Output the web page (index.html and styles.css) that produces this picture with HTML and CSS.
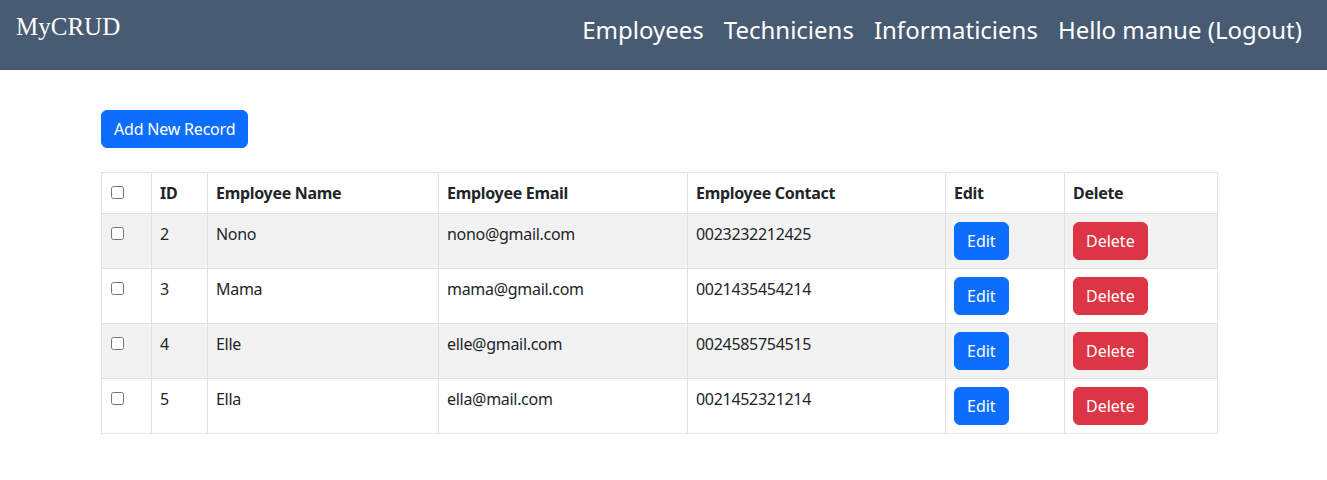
FILE: index.html
```html
<!DOCTYPE html>
<html>
<head>
<meta charset="utf-8">
<link rel="stylesheet" href="styles.css">
</head>
<body>
<header class="navbar">
  <div class="brand">MyCRUD</div>
  <nav class="links">
    <a href="#">Employees</a>
    <a href="#">Techniciens</a>
    <a href="#">Informaticiens</a>
    <a href="#">Hello manue (Logout)</a>
  </nav>
</header>
<main class="container">
  <button class="btn btn-primary add">Add New Record</button>
  <table class="table">
    <colgroup>
      <col class="c-check"><col class="c-id"><col class="c-name"><col class="c-email"><col class="c-contact"><col class="c-edit"><col class="c-del">
    </colgroup>
    <thead>
      <tr><th><input type="checkbox"></th><th>ID</th><th>Employee Name</th><th>Employee Email</th><th>Employee Contact</th><th>Edit</th><th>Delete</th></tr>
    </thead>
    <tbody>
      <tr class="odd"><td><input type="checkbox"></td><td>2</td><td>Nono</td><td>nono@gmail.com</td><td>0023232212425</td><td><button class="btn btn-primary">Edit</button></td><td><button class="btn btn-danger">Delete</button></td></tr>
      <tr><td><input type="checkbox"></td><td>3</td><td>Mama</td><td>mama@gmail.com</td><td>0021435454214</td><td><button class="btn btn-primary">Edit</button></td><td><button class="btn btn-danger">Delete</button></td></tr>
      <tr class="odd"><td><input type="checkbox"></td><td>4</td><td>Elle</td><td>elle@gmail.com</td><td>0024585754515</td><td><button class="btn btn-primary">Edit</button></td><td><button class="btn btn-danger">Delete</button></td></tr>
      <tr><td><input type="checkbox"></td><td>5</td><td>Ella</td><td>ella@mail.com</td><td>0021452321214</td><td><button class="btn btn-primary">Edit</button></td><td><button class="btn btn-danger">Delete</button></td></tr>
    </tbody>
  </table>
</main>
</body>
</html>
```
FILE: styles.css
```css
* { box-sizing: border-box; }
body {
  margin: 0;
  font-family: "Noto Sans", "DejaVu Sans", sans-serif;
  font-size: 16px;
  line-height: 24px;
  color: #212529;
  background: #fff;
}
.navbar {
  height: 70px;
  background: #475b73;
  display: flex;
  justify-content: space-between;
  align-items: flex-start;
  padding: 0 25px 0 16px;
}
.brand {
  font-family: "Liberation Serif", serif;
  font-size: 25px;
  line-height: 30px;
  color: #fff;
  margin-top: 12px;
}
.links {
  display: flex;
  gap: 20px;
  margin-top: 14px;
}
.links a {
  color: #fff;
  text-decoration: none;
  font-size: 24px;
  line-height: 32px;
}
.container {
  width: 1116px;
  margin-left: 101px;
  padding-top: 40px;
}
.btn {
  font-family: inherit;
  font-size: 16px;
  line-height: 24px;
  letter-spacing: -0.2px;
  padding: 6px 12px;
  border: 1px solid transparent;
  border-radius: 6px;
  color: #fff;
  cursor: pointer;
}
.table .btn { letter-spacing: 0; }
.btn-primary { background: #0d6efd; border-color: #0d6efd; }
.btn-danger { background: #dc3545; border-color: #dc3545; }
.add { display: block; }
.table {
  margin-top: 24px;
  width: 1116px;
  border-collapse: collapse;
  table-layout: fixed;
  letter-spacing: -0.3px;
}
.c-check { width: 50px; }
.c-id { width: 56px; }
.c-name { width: 231px; }
.c-email { width: 249px; }
.c-contact { width: 258px; }
.c-edit { width: 119px; }
.c-del { width: 153px; }
.table th, .table td {
  border: 1px solid #dee2e6;
  padding: 8px;
  text-align: left;
  vertical-align: top;
}
.table th { font-weight: 700; }
.table tbody td { height: 55px; }
.table tr.odd td { background: #f2f2f2; }
input[type=checkbox] {
  width: 13px;
  height: 13px;
  margin: 5px 0 0 1px;
  vertical-align: top;
}
```
